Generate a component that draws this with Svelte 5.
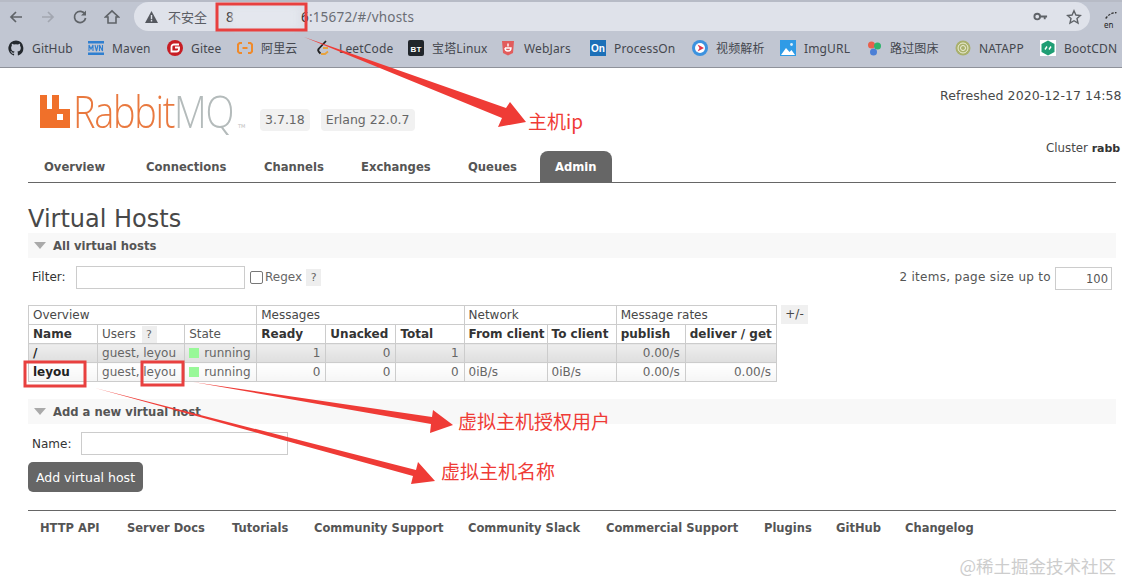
<script>
  const bookmarks = [
    { id: 'github', label: 'GitHub' },
    { id: 'maven', label: 'Maven' },
    { id: 'gitee', label: 'Gitee' },
    { id: 'ali', label: '阿里云' },
    { id: 'leet', label: 'LeetCode' },
    { id: 'bt', label: '宝塔Linux' },
    { id: 'webjars', label: 'WebJars' },
    { id: 'on', label: 'ProcessOn' },
    { id: 'video', label: '视频解析' },
    { id: 'img', label: 'ImgURL' },
    { id: 'lu', label: '路过图床' },
    { id: 'nat', label: 'NATAPP' },
    { id: 'boot', label: 'BootCDN' }
  ];
  const tabs = ['Overview', 'Connections', 'Channels', 'Exchanges', 'Queues', 'Admin'];
  const footer = ['HTTP API', 'Server Docs', 'Tutorials', 'Community Support', 'Community Slack', 'Commercial Support', 'Plugins', 'GitHub', 'Changelog'];
  const rows = [
    { name: '/', users: 'guest, leyou', ready: 1, unacked: 0, total: 1, from: '', to: '', publish: '0.00/s', deliver: '', alt: true },
    { name: 'leyou', users: 'guest, leyou', ready: 0, unacked: 0, total: 0, from: '0iB/s', to: '0iB/s', publish: '0.00/s', deliver: '0.00/s', alt: false }
  ];
</script>

<div class="screen">
  <header class="chrome">
    <div class="toolbar">
      <svg class="nav" viewBox="0 0 16 16"><path d="M14 8H3M8 3 3 8l5 5" fill="none" stroke="#5f6368" stroke-width="1.7"/></svg>
      <svg class="nav" viewBox="0 0 16 16"><path d="M2 8h11M8 3l5 5-5 5" fill="none" stroke="#a2a6b0" stroke-width="1.7"/></svg>
      <svg class="nav" viewBox="0 0 16 16"><path d="M13 5.2A5.6 5.6 0 1 0 13.6 9" fill="none" stroke="#5f6368" stroke-width="1.7"/><path d="M14 1.5v5H9z" fill="#5f6368"/></svg>
      <svg class="nav" viewBox="0 0 16 16"><path d="M8 1.8 1.5 8H4v6h8V8h2.500zM8 3.800" fill="none" stroke="#5f6368" stroke-width="1.6"/></svg>
      <div class="omnibox">
        <svg class="warn" viewBox="0 0 14 14"><path d="M7 1 .5 13h13z" fill="#55585f"/><path d="M6.300 5h1.400v4.300H6.300zM6.300 10h1.400v1.400H6.300z" fill="#dfe2ea"/></svg>
        <span class="insecure">不安全</span>
        <span class="url"><span class="url-head">8</span><span class="url-hidden"></span>6<span class="url-rest">:15672/#/vhosts</span></span>
        <svg class="key" viewBox="0 0 16 16"><circle cx="4.500" cy="8" r="3" fill="none" stroke="#5f6368" stroke-width="2"/><path d="M7.500 7h7.500v2h-1.500v2h-2V9h-4z" fill="#5f6368"/></svg>
        <svg class="star" viewBox="0 0 16 16"><path d="m8 1.800 1.900 4.200 4.500.5-3.400 3 1 4.500L8 11.700 4 14l1-4.500-3.400-3 4.500-.5z" fill="none" stroke="#5f6368" stroke-width="1.400"/></svg>
      </div>
      <div class="ext">
        <svg viewBox="0 0 16 12" class="ext-icon"><path d="M1 9q5-7 13-7" fill="none" stroke="#333" stroke-width="1.600" stroke-dasharray="3 1.500"/></svg>
        <span>en</span>
      </div>
    </div>
    <nav class="bookmarks">
      {#each bookmarks as b}
        <div class="bookmark">
          <svg class="bm-icon" viewBox="0 0 16 16">
            {#if b.id === 'github'}
              <path d="M8 .5a7.700 7.700 0 0 0-2.400 15c.4 0 .5-.2.5-.4v-1.400c-2.100.5-2.600-1-2.600-1-.3-.9-.8-1.100-.8-1.100-.7-.5 0-.5 0-.5.8 0 1.200.8 1.200.8.7 1.200 1.800.9 2.200.7 0-.5.300-.9.500-1.100-1.700-.2-3.500-.9-3.500-3.800 0-.8.300-1.500.8-2-.1-.2-.3-1 0-2 0 0 .7-.2 2.100.8a7 7 0 0 1 3.800 0c1.500-1 2.100-.8 2.100-.8.4 1 .2 1.800.1 2 .5.500.8 1.200.8 2 0 2.900-1.800 3.600-3.500 3.800.3.200.5.700.5 1.400v2.100c0 .2.100.4.500.4A7.700 7.700 0 0 0 8 .5" fill="#24292e"/>
            {:else if b.id === 'maven'}
              <rect y="1" width="16" height="2.500" fill="#2f7fd0"/><rect y="12.500" width="16" height="2.500" fill="#2f7fd0"/><path d="M1 11V5l2 4 2-4v6M7 5l1.500 6L10 5M11.500 11V5l3 6V5" fill="none" stroke="#2f7fd0" stroke-width="1.100"/>
            {:else if b.id === 'gitee'}
              <circle cx="8" cy="8" r="8" fill="#c71d23"/><path d="M12 4.500H7a2.500 2.500 0 0 0-2.500 2.500v4.500h5a2.500 2.500 0 0 0 2.500-2.500V7.500H8" fill="none" stroke="#fff" stroke-width="1.800"/>
            {:else if b.id === 'ali'}
              <path d="M5 3H2.500L1 4.500v7L2.500 13H5M11 3h2.500L15 4.500v7L13.500 13H11M5.500 8h5" fill="none" stroke="#ef8a2b" stroke-width="2"/>
            {:else if b.id === 'leet'}
              <path d="M11 1 4 8.500a2.500 2.500 0 0 0 0 3.500l1.500 1.500" fill="none" stroke="#222" stroke-width="1.800"/><path d="M6 14h4l3-2.500M8 8h5" fill="none" stroke="#e8a33d" stroke-width="1.800"/>
            {:else if b.id === 'bt'}
              <rect width="16" height="16" rx="2" fill="#20252a"/><text x="8" y="11.500" text-anchor="middle" class="bm-glyph" fill="#fff">BT</text>
            {:else if b.id === 'webjars'}
              <path d="M2 1h12l-1 12-5 2.500L3 13z" fill="#e25c5c"/><path d="M5 8h6q0 3-3 3T5 8M8 3.500v3" fill="none" stroke="#fff" stroke-width="1.400"/>
            {:else if b.id === 'on'}
              <rect width="16" height="16" fill="#1c70b8"/><text x="8" y="12" text-anchor="middle" class="bm-glyph-on" fill="#fff">On</text>
            {:else if b.id === 'video'}
              <circle cx="8" cy="8" r="8" fill="#3c92df"/><circle cx="8" cy="8" r="5" fill="#fff"/><path d="m5.500 4.500 6.500 3.500-6.500 3.500 2-3.500z" fill="#e2344a"/>
            {:else if b.id === 'img'}
              <rect width="16" height="16" fill="#2f9be6"/><path d="M1 15 6 8l3.500 4 2-2 3.500 5z" fill="#fff"/><circle cx="11.500" cy="4.500" r="1.400" fill="#d7eefc"/>
            {:else if b.id === 'lu'}
              <circle cx="5.500" cy="5" r="3.500" fill="#e8604c"/><circle cx="11.500" cy="6" r="3.500" fill="#2fb36c"/><circle cx="7.500" cy="12" r="3.500" fill="#4b7fd6"/>
            {:else if b.id === 'nat'}
              <circle cx="8" cy="8" r="7.500" fill="#a9b06c"/><circle cx="8" cy="8" r="5" fill="none" stroke="#eef0d8" stroke-width="1"/><circle cx="8" cy="8" r="2.500" fill="none" stroke="#eef0d8" stroke-width="1"/>
            {:else}
              <rect width="16" height="16" fill="#fff"/><path d="M8 .5 14.500 4v8L8 15.500 1.500 12V4z" fill="#1f9e74"/><path d="M5 9.500 7 6.500M9 9.500l2-3" stroke="#fff" stroke-width="1.400"/>
            {/if}
          </svg>
          <span>{b.label}</span>
        </div>
      {/each}
    </nav>
  </header>

  <main class="page">
    <div class="top">
      <div class="logo">
        <svg class="logo-mark" viewBox="0 0 30 33"><path d="M0 0h7v14h5V0h7v14h11v19H0z" fill="#f0702a"/><rect x="17" y="19" width="6" height="6" fill="#fff"/></svg>
        <span class="logo-text"><span class="rabbit">Rabbit</span><span class="mq">MQ</span></span>
        <span class="tm">TM</span>
      </div>
      <span class="version">3.7.18</span>
      <span class="version erlang">Erlang 22.0.7</span>
      <div class="top-right">
        <div>Refreshed 2020-12-17 14:58</div>
        <div class="cluster">Cluster <b>rabb</b></div>
      </div>
    </div>

    <ul class="tabs">
      {#each tabs as t}
        <li class:active={t === 'Admin'}>{t}</li>
      {/each}
    </ul>

    <h1>Virtual Hosts</h1>

    <div class="section-bar">
      <span class="tri"></span><h2>All virtual hosts</h2>
    </div>

    <div class="filter-row">
      <label class="filter-label" for="filter">Filter:</label>
      <input id="filter" class="filter-input" />
      <span class="checkbox"></span>
      <span class="regex">Regex</span>
      <span class="help">?</span>
      <span class="paging">2 items, page size up to</span>
      <span class="page-size">100</span>
    </div>

    <div class="table-wrap">
      <table>
        <colgroup>
          <col class="c-name" /><col class="c-users" /><col class="c-state" />
          <col class="c-ready" /><col class="c-unacked" /><col class="c-total" />
          <col class="c-from" /><col class="c-to" />
          <col class="c-publish" /><col class="c-deliver" />
        </colgroup>
        <thead>
          <tr class="groups">
            <th colspan="3">Overview</th>
            <th colspan="3">Messages</th>
            <th colspan="2">Network</th>
            <th colspan="2">Message rates</th>
          </tr>
          <tr class="heads">
            <th>Name</th>
            <th class="light">Users <span class="help small">?</span></th>
            <th class="light">State</th>
            <th>Ready</th>
            <th>Unacked</th>
            <th>Total</th>
            <th>From client</th>
            <th>To client</th>
            <th>publish</th>
            <th>deliver / get</th>
          </tr>
        </thead>
        <tbody>
          {#each rows as r}
            <tr class:alt={r.alt}>
              <td class="name">{r.name}</td>
              <td class="users">{r.users}</td>
              <td class="state"><span class="dot"></span>running</td>
              <td class="num">{r.ready}</td>
              <td class="num">{r.unacked}</td>
              <td class="num">{r.total}</td>
              <td>{r.from}</td>
              <td>{r.to}</td>
              <td class="num">{r.publish}</td>
              <td class="num">{r.deliver}</td>
            </tr>
          {/each}
        </tbody>
      </table>
      <span class="plus">+/-</span>
    </div>

    <div class="section-bar second">
      <span class="tri"></span><h2>Add a new virtual host</h2>
    </div>

    <div class="name-row">
      <label class="filter-label" for="vhost">Name:</label>
      <input id="vhost" class="name-input" />
      <span class="req">*</span>
    </div>
    <button class="add">Add virtual host</button>

    <footer class="foot">
      {#each footer as f}
        <span>{f}</span>
      {/each}
    </footer>
  </main>

  <span class="blur-patch"></span>
  <svg class="marks" viewBox="0 0 1122 583">
    <g fill="none" stroke="#e8403f" stroke-width="3">
      <rect x="217" y="4" width="89" height="26"/>
      <rect x="25" y="362" width="60" height="24"/>
      <rect x="142" y="362" width="41" height="23"/>
    </g>
    <g fill="#ef3b36">
      <path d="M304 37 506 108 510 102 526 122 498 127 502 118z"/>
      <path d="M193 382 432 417 433 410 453 425 430 433 431 424z"/>
      <path d="M95 388 416 470 418 462 435 481 411 484 413 476z"/>
    </g>
  </svg>
  <span class="note note-ip">主机ip</span>
  <span class="note note-user">虚拟主机授权用户</span>
  <span class="note note-name">虚拟主机名称</span>
  <span class="watermark">@稀土掘金技术社区</span>
</div>

<style>
  :global(body) {
    margin: 0;
    background: #fff;
  }

  .screen {
    position: relative;
    width: 1122px;
    height: 583px;
    overflow: hidden;
    font-family: "DejaVu Sans", Verdana, sans-serif;
    font-size: 12px;
    color: #484848;
  }

  /* browser bar */
  .chrome {
    height: 68px;
    background: #c1c6d2;
    border-bottom: 1px solid #8f929a;
    box-shadow: inset 0 2px 0 #b7bbc6;
    box-sizing: border-box;
    font-family: "Noto Sans", "Noto Sans CJK SC", sans-serif;
    color: #44474e;
  }

  .toolbar {
    display: flex;
    align-items: center;
    height: 33px;
    padding-left: 8px;
  }

  .nav {
    width: 16px;
    height: 16px;
    margin-right: 16px;
    flex: none;
  }

  .omnibox {
    display: flex;
    align-items: center;
    width: 956px;
    height: 29px;
    margin-left: -2px;
    padding: 0 8px 0 10px;
    box-sizing: border-box;
    border-radius: 15px;
    background: #dfe2ea;
    flex: none;
  }

  .warn {
    width: 15px;
    height: 14px;
    margin-right: 9px;
  }

  .insecure {
    font-size: 13px;
    color: #5a5d64;
    width: 47px;
    font-family: "Noto Sans CJK SC", sans-serif;
  }

  .url {
    display: flex;
    font-size: 13.500px;
    color: #2d2f33;
    letter-spacing: 0.200px;
  }

  .url-head {
    margin-left: 11px;
  }

  .url-hidden {
    width: 67px;
  }

  .url-rest {
    color: #6b6e75;
  }

  .key {
    width: 15px;
    height: 15px;
    margin-left: auto;
    margin-right: 18px;
  }

  .star {
    width: 16px;
    height: 16px;
  }

  .ext {
    margin-left: 14px;
    width: 20px;
    font-size: 8px;
    line-height: 8px;
    padding-top: 6px;
    color: #222;
  }

  .ext-icon {
    display: block;
    width: 15px;
    height: 10px;
  }

  .bookmarks {
    display: grid;
    grid-template-columns: 80px 79px 70px 78px 93px 92px 90px 102px 88px 86px 89px 85px auto;
    align-items: center;
    height: 30px;
    padding-left: 8px;
    white-space: nowrap;
    font-size: 12px;
    letter-spacing: 0.150px;
  }

  .bookmark {
    display: flex;
    align-items: center;
    gap: 8px;
  }

  .bm-icon {
    width: 16px;
    height: 16px;
    flex: none;
  }

  .bm-glyph {
    font: bold 8px "Liberation Sans", sans-serif;
  }

  .bm-glyph-on {
    font: bold 10px "Liberation Sans", sans-serif;
  }

  /* management page */
  .page {
    padding: 0 6px 0 28px;
  }

  .top {
    display: flex;
    align-items: flex-start;
    height: 83px;
    white-space: nowrap;
  }

  .logo {
    display: flex;
    align-items: flex-start;
    width: 232px;
    padding-top: 27px;
    flex: none;
  }

  .logo-mark {
    width: 30px;
    height: 33px;
    margin-left: 12px;
    flex: none;
  }

  .logo-text {
    display: inline-block;
    width: 165px;
    margin-left: 3px;
    font-family: "Open Sans", sans-serif;
    font-weight: 300;
    font-size: 44px;
    line-height: 33px;
    letter-spacing: -1.500px;
    transform: scaleX(0.86);
    transform-origin: left center;
  }

  .rabbit {
    color: #e9793f;
  }

  .mq {
    color: #b4bbbb;
  }

  .tm {
    margin-top: 28px;
    font-size: 5px;
    color: #bbb;
  }

  .version {
    margin-top: 41px;
    padding: 0 5px;
    height: 22px;
    line-height: 22px;
    border-radius: 4px;
    background: #f1f1f1;
    font-size: 12.500px;
    color: #666;
  }

  .erlang {
    margin-left: 11px;
  }

  .top-right {
    position: absolute;
    left: 940px;
    top: 88px;
    font-size: 12.500px;
    line-height: 15px;
    letter-spacing: 0.080px;
    color: #484848;
  }

  .cluster {
    margin-top: 38px;
    margin-left: 106px;
    letter-spacing: 0;
    font-size: 11.800px;
  }

  .cluster b {
    font-size: 11px;
    color: #333;
  }

  .tabs {
    display: grid;
    grid-template-columns: 102px 118px 97px 107px 89px auto;
    justify-content: start;
    list-style: none;
    margin: 0;
    padding: 0 0 0 16px;
    height: 31px;
    border-bottom: 1px solid #666;
    font-weight: bold;
    font-size: 11.600px;
    color: #555;
  }

  .tabs li {
    padding-top: 9px;
    line-height: 15px;
    white-space: nowrap;
  }

  .tabs li.active {
    margin-left: -17px;
    padding: 9px 15px 0;
    border-radius: 8px 8px 0 0;
    background: #666;
    color: #fff;
  }

  h1 {
    margin: 23px 0 0;
    font-size: 24px;
    line-height: 27px;
    font-weight: normal;
    color: #484848;
  }

  .section-bar {
    display: flex;
    align-items: center;
    height: 25px;
    padding-left: 6px;
    background: #f8f8f8;
  }

  .section-bar.second {
    margin-top: 17px;
  }

  h2 {
    margin: 0;
    font-size: 11.600px;
    font-weight: bold;
    color: #555;
  }

  .tri {
    width: 0;
    height: 0;
    margin-right: 7px;
    border-left: 6px solid transparent;
    border-right: 6px solid transparent;
    border-top: 7px solid #aaa;
  }

  .filter-row {
    display: flex;
    align-items: center;
    height: 26px;
    margin-top: 6px;
    padding-left: 4px;
  }

  .filter-label {
    color: #333;
    width: 44px;
    flex: none;
    font-size: 12px;
  }

  .filter-input,
  .name-input {
    box-sizing: border-box;
    height: 23px;
    padding: 0;
    border: 1px solid #ccc;
    background: #fff;
    flex: none;
  }

  .filter-input {
    width: 169px;
  }

  .checkbox {
    width: 11px;
    height: 11px;
    margin-left: 5px;
    border: 1px solid #777;
    border-radius: 2px;
  }

  .regex {
    margin-left: 2px;
    font-size: 12px;
    color: #666;
  }

  .help {
    display: inline-block;
    width: 15px;
    height: 17px;
    line-height: 17px;
    margin-left: 4px;
    text-align: center;
    background: #eee;
    font-size: 11px;
    font-weight: normal;
    color: #666;
  }

  .help.small {
    margin-left: 2px;
  }

  .paging {
    margin-left: auto;
    font-size: 12px;
    letter-spacing: 0.300px;
    color: #555;
  }

  .page-size {
    box-sizing: border-box;
    width: 57px;
    height: 23px;
    margin: 3px 4px 0 4px;
    padding-right: 3px;
    line-height: 23px;
    text-align: right;
    border: 1px solid #ccc;
    font-size: 11.500px;
    color: #555;
  }

  .table-wrap {
    display: flex;
    align-items: flex-start;
    margin-top: 15px;
  }

  table {
    table-layout: fixed;
    width: 749px;
    border-collapse: collapse;
    font-size: 12px;
    color: #484848;
    line-height: 18px;
  }

  .c-name { width: 69px; }
  .c-users { width: 87px; }
  .c-state { width: 72px; }
  .c-ready { width: 69px; }
  .c-unacked { width: 70px; }
  .c-total { width: 68px; }
  .c-from { width: 83px; }
  .c-to { width: 69px; }
  .c-publish { width: 69px; }
  .c-deliver { width: 91px; }

  th,
  td {
    height: 18px;
    padding: 0 0 0 4px;
    border: 1px solid #ccc;
    text-align: left;
    white-space: nowrap;
    overflow: hidden;
  }

  .groups th {
    font-weight: normal;
    color: #484848;
  }

  .heads th {
    color: #333;
    font-weight: bold;
  }

  .heads th.light {
    font-weight: normal;
    color: #555;
  }

  td {
    color: #666;
    background: linear-gradient(#fff, #f5f5f5);
  }

  tr.alt td {
    background: linear-gradient(#eee, #dedede);
  }

  td.name {
    font-weight: bold;
    color: #222;
  }

  td.num {
    text-align: right;
    padding-right: 5px;
  }

  .dot {
    display: inline-block;
    width: 10px;
    height: 10px;
    margin-right: 5px;
    background: #98f898;
    vertical-align: -1px;
  }

  .plus {
    width: 27px;
    height: 19px;
    line-height: 19px;
    margin-left: 4px;
    text-align: center;
    background: #f0f0f0;
    color: #484848;
    font-size: 12px;
  }

  .name-row {
    display: flex;
    align-items: center;
    margin-top: 8px;
    padding-left: 4px;
  }

  .name-row .filter-label {
    width: 49px;
  }

  .name-input {
    width: 207px;
  }

  .req {
    margin-left: 6px;
    font-size: 10px;
    color: #e9b8b8;
  }

  .add {
    display: block;
    width: 115px;
    height: 30px;
    margin-top: 7px;
    padding: 0;
    border: 0;
    border-radius: 5px;
    background: #666;
    color: #fff;
    font: 12.500px "DejaVu Sans", Verdana, sans-serif;
  }

  .foot {
    display: grid;
    grid-template-columns: 87px 105px 82px 154px 138px 158px 72px 69px auto;
    justify-content: start;
    margin-top: 18px;
    padding: 10px 0 0 12px;
    border-top: 1px solid #666;
    font-weight: bold;
    font-size: 11.500px;
    color: #555;
    white-space: nowrap;
  }

  /* annotations drawn over the capture */
  .blur-patch {
    position: absolute;
    left: 232px;
    top: 8px;
    width: 65px;
    height: 20px;
    background: #e4e7ee;
    filter: blur(3px);
  }

  .marks {
    position: absolute;
    inset: 0;
    width: 1122px;
    height: 583px;
    pointer-events: none;
  }

  .note {
    position: absolute;
    color: #ef3b36;
    font-family: "Noto Sans CJK SC", sans-serif;
    font-size: 19px;
    line-height: 24px;
    white-space: nowrap;
  }

  .note-ip {
    left: 528px;
    top: 109px;
  }

  .note-user {
    left: 458px;
    top: 409px;
  }

  .note-name {
    left: 441px;
    top: 459px;
  }

  .watermark {
    position: absolute;
    right: 6px;
    bottom: 5px;
    font-family: "Noto Sans CJK SC", sans-serif;
    font-size: 17.500px;
    color: #cdcdcd;
  }
</style>
